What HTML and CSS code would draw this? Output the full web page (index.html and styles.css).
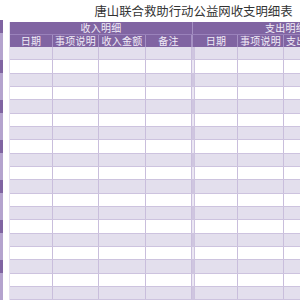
FILE: index.html
```html
<!DOCTYPE html>
<html lang="zh-CN">
<head>
<meta charset="utf-8">
<title>唐山联合救助行动公益网收支明细表</title>
<link rel="stylesheet" href="styles.css">
</head>
<body>
<div class="page">
  <div class="strip"></div>
  <div class="main">
    <h1 class="title">唐山联合救助行动公益网收支明细表</h1>
    <div class="sheet">
      <div class="row head1">
        <div class="cell group">收入明细</div>
        <div class="sep"></div>
        <div class="cell group">支出明细</div>
      </div>
      <div class="row head2">
        <div class="cell">日期</div>
        <div class="cell">事项说明</div>
        <div class="cell">收入金额</div>
        <div class="cell">备注</div>
        <div class="sep"></div>
        <div class="cell">日期</div>
        <div class="cell">事项说明</div>
        <div class="cell">支出金额</div>
        <div class="cell">备注</div>
      </div>
      <div class="row data"><div class="cell"></div><div class="cell"></div><div class="cell"></div><div class="cell"></div><div class="sep"></div><div class="cell"></div><div class="cell"></div><div class="cell"></div><div class="cell"></div></div>
      <div class="row data"><div class="cell"></div><div class="cell"></div><div class="cell"></div><div class="cell"></div><div class="sep"></div><div class="cell"></div><div class="cell"></div><div class="cell"></div><div class="cell"></div></div>
      <div class="row data"><div class="cell"></div><div class="cell"></div><div class="cell"></div><div class="cell"></div><div class="sep"></div><div class="cell"></div><div class="cell"></div><div class="cell"></div><div class="cell"></div></div>
      <div class="row data"><div class="cell"></div><div class="cell"></div><div class="cell"></div><div class="cell"></div><div class="sep"></div><div class="cell"></div><div class="cell"></div><div class="cell"></div><div class="cell"></div></div>
      <div class="row data"><div class="cell"></div><div class="cell"></div><div class="cell"></div><div class="cell"></div><div class="sep"></div><div class="cell"></div><div class="cell"></div><div class="cell"></div><div class="cell"></div></div>
      <div class="row data"><div class="cell"></div><div class="cell"></div><div class="cell"></div><div class="cell"></div><div class="sep"></div><div class="cell"></div><div class="cell"></div><div class="cell"></div><div class="cell"></div></div>
      <div class="row data"><div class="cell"></div><div class="cell"></div><div class="cell"></div><div class="cell"></div><div class="sep"></div><div class="cell"></div><div class="cell"></div><div class="cell"></div><div class="cell"></div></div>
      <div class="row data"><div class="cell"></div><div class="cell"></div><div class="cell"></div><div class="cell"></div><div class="sep"></div><div class="cell"></div><div class="cell"></div><div class="cell"></div><div class="cell"></div></div>
      <div class="row data"><div class="cell"></div><div class="cell"></div><div class="cell"></div><div class="cell"></div><div class="sep"></div><div class="cell"></div><div class="cell"></div><div class="cell"></div><div class="cell"></div></div>
      <div class="row data"><div class="cell"></div><div class="cell"></div><div class="cell"></div><div class="cell"></div><div class="sep"></div><div class="cell"></div><div class="cell"></div><div class="cell"></div><div class="cell"></div></div>
      <div class="row data"><div class="cell"></div><div class="cell"></div><div class="cell"></div><div class="cell"></div><div class="sep"></div><div class="cell"></div><div class="cell"></div><div class="cell"></div><div class="cell"></div></div>
      <div class="row data"><div class="cell"></div><div class="cell"></div><div class="cell"></div><div class="cell"></div><div class="sep"></div><div class="cell"></div><div class="cell"></div><div class="cell"></div><div class="cell"></div></div>
      <div class="row data"><div class="cell"></div><div class="cell"></div><div class="cell"></div><div class="cell"></div><div class="sep"></div><div class="cell"></div><div class="cell"></div><div class="cell"></div><div class="cell"></div></div>
      <div class="row data"><div class="cell"></div><div class="cell"></div><div class="cell"></div><div class="cell"></div><div class="sep"></div><div class="cell"></div><div class="cell"></div><div class="cell"></div><div class="cell"></div></div>
      <div class="row data"><div class="cell"></div><div class="cell"></div><div class="cell"></div><div class="cell"></div><div class="sep"></div><div class="cell"></div><div class="cell"></div><div class="cell"></div><div class="cell"></div></div>
      <div class="row data"><div class="cell"></div><div class="cell"></div><div class="cell"></div><div class="cell"></div><div class="sep"></div><div class="cell"></div><div class="cell"></div><div class="cell"></div><div class="cell"></div></div>
      <div class="row data"><div class="cell"></div><div class="cell"></div><div class="cell"></div><div class="cell"></div><div class="sep"></div><div class="cell"></div><div class="cell"></div><div class="cell"></div><div class="cell"></div></div>
      <div class="row data"><div class="cell"></div><div class="cell"></div><div class="cell"></div><div class="cell"></div><div class="sep"></div><div class="cell"></div><div class="cell"></div><div class="cell"></div><div class="cell"></div></div>
      <div class="row data"><div class="cell"></div><div class="cell"></div><div class="cell"></div><div class="cell"></div><div class="sep"></div><div class="cell"></div><div class="cell"></div><div class="cell"></div><div class="cell"></div></div>
    </div>
  </div>
</div>
</body>
</html>
```
FILE: styles.css
```css
html, body {
  margin: 0;
  padding: 0;
  background: #ffffff;
  overflow: hidden;
}

.page {
  display: flex;
  gap: 7px;
  width: 380px;
  height: 300px;
  font-family: "Noto Sans CJK SC", "Noto Sans", sans-serif;
}

.strip {
  width: 3px;
  flex: none;
  background:
    repeating-linear-gradient(to bottom, #8064a2 0 13px, #b4a3ce 13px 40px) 0 20px / 3px 280px no-repeat;
}

.main {
  width: 367px;
  flex: none;
}

.title {
  margin: 0;
  height: 22px;
  line-height: 22px;
  font-size: 12.4px;
  font-weight: normal;
  color: #333333;
  text-align: center;
}

.sheet {
  border-left: 1px solid #e6e1f0;
  margin-left: -1px;
}

.row {
  display: grid;
  grid-template-columns: 43px 46px 47px 46px 3px 43px 46px 46px 46px;
  box-sizing: border-box;
}

.head1 {
  grid-template-columns: 182px 3px 181px;
  height: 13px;
  background: #8064a2;
  border-bottom: 1px solid #9a82bb;
}

.head2 {
  height: 12px;
  background: #8064a2;
}

.head1 .cell,
.head2 .cell {
  display: flex;
  align-items: center;
  justify-content: center;
  color: #f1ecf7;
  font-size: 10px;
  line-height: 1;
  letter-spacing: 0.3px;
  white-space: nowrap;
}

.head2 .cell {
  border-right: 1px solid #a590c3;
}

.head1 .sep,
.head2 .sep {
  background: #8064a2;
  border-left: 1px solid #a590c3;
}

.data {
  height: 13.333px;
  border-bottom: 1px solid #cdc3df;
}

.data .cell {
  border-right: 1px solid #c9bedc;
}

.data .sep {
  background: #ebe7f3;
  border-right: 1px solid #cdc3df;
}

.data:nth-child(odd) {
  background: #e3dfed;
}

.data:nth-child(odd) .sep {
  background: #cfc6e0;
}

.data:nth-child(even) {
  background: #ffffff;
}
```
